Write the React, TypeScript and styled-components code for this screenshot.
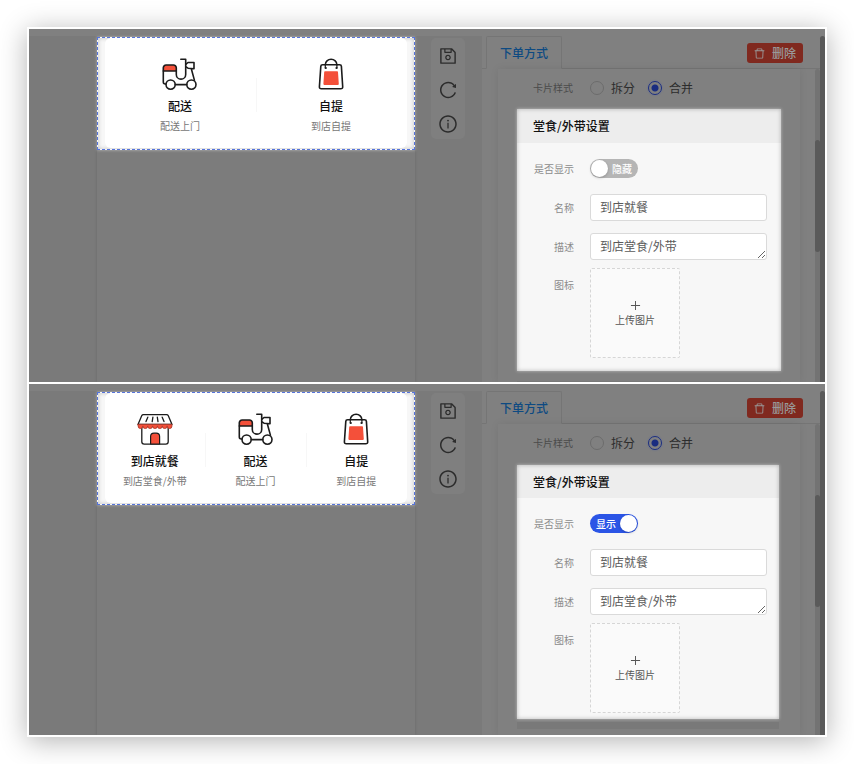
import React, { useState } from "react";
import styled, { createGlobalStyle, css } from "styled-components";
import {
  AiOutlineDelete,
  AiOutlineInfoCircle,
  AiOutlinePlus,
  AiOutlineReload,
  AiOutlineSave,
} from "react-icons/ai";

const GlobalStyle = createGlobalStyle`
  *, *::before, *::after { box-sizing: border-box; }
  body {
    margin: 0;
    background: #fff;
    color: #111;
    font-family: "Noto Sans CJK SC", sans-serif;
    font-size: 12px;
    line-height: 20px;
  }
  button, input, textarea { font: inherit; color: inherit; margin: 0; }
  button { border: 0; padding: 0; background: none; cursor: pointer; }
`;

const Page = styled.main`
  padding: 27px;
`;

const Frame = styled.div`
  display: flex;
  flex-direction: column;
  gap: 2px;
  border: 2px solid #fff;
  background: #fff;
  box-shadow: 0 4px 26px rgba(0, 0, 0, 0.3);
`;

const Panel = styled.section`
  display: grid;
  grid-template-columns: minmax(0, 1fr) 343px;
  padding-top: 7px;
  background: #808080;
  overflow: hidden;
`;

const Preview = styled.div`
  display: grid;
  grid-template-columns: 1fr 318px 1fr;
  background: #7a7a7a;
`;

const Phone = styled.div`
  grid-column: 2;
  padding-top: 1px;
  background: #7c7c7c;
  box-shadow: 0 0 3px rgba(0, 0, 0, 0.14);
`;

const Selection = styled.div`
  padding: 0 7px 1px;
  border: 1px dashed #5674dc;
  background: #f7f7f7;
  box-shadow: 0 0 3px rgba(255, 255, 255, 0.5), inset 0 0 4px rgba(0, 0, 0, 0.22);
`;

const Modes = styled.ul`
  display: flex;
  margin: 0;
  padding: 20px 0 12px;
  list-style: none;
  border-radius: 6px;
  background: #fff;
`;

const Mode = styled.li`
  flex: 1;
  display: flex;
  flex-direction: column;
  align-items: center;
  position: relative;

  & + &::before {
    content: "";
    position: absolute;
    left: 0;
    top: 20px;
    height: 34px;
    border-left: 1px solid #f7f7f7;
  }
`;

const ModeIcon = styled.svg`
  width: 36px;
  height: 34px;
  margin-bottom: 4px;
  fill: none;
  stroke: #1b1b1b;
  stroke-width: 1.6;
  stroke-linecap: round;
  stroke-linejoin: round;
`;

const ModeTitle = styled.strong`
  font-weight: 500;
`;

const ModeNote = styled.span`
  font-size: 10px;
  color: #777;
`;

const Tools = styled.div`
  justify-self: start;
  align-self: start;
  display: flex;
  flex-direction: column;
  align-items: center;
  gap: 14px;
  width: 34px;
  margin: 2px 0 0 16px;
  padding: 8px 0 5px;
  border-radius: 5px;
  background: #7f7f7f;
`;

const ToolButton = styled.button`
  display: flex;
  color: #2c2c2c;

  svg {
    width: 20px;
    height: 20px;
  }
`;

const Side = styled.div`
  display: flex;
`;

const Editor = styled.div`
  flex: 1;
  display: flex;
  flex-direction: column;
`;

const Track = styled.div<{ $outer?: boolean }>`
  width: 5px;
  flex: none;
  border-radius: 3px 3px 0 0;
  background: ${(p) => (p.$outer ? "#595959" : "#737373")};
`;

const Thumb = styled.div`
  height: 112px;
  margin-top: 71px;
  border-radius: 3px;
  background: #5a5a5a;
`;

const TabBar = styled.div`
  display: flex;
  justify-content: space-between;
  align-items: flex-start;
  height: 33px;
  padding: 0 17px 0 4px;
  box-shadow: inset 0 -1px #757575;
`;

const Tab = styled.button`
  align-self: stretch;
  padding: 0 13px;
  border: 1px solid #757575;
  border-bottom-color: #808080;
  border-radius: 2px 2px 0 0;
  background: #808080;
  color: #0d4a82;
  font-weight: 500;
`;

const DeleteButton = styled.button`
  display: flex;
  align-items: center;
  gap: 6px;
  height: 20px;
  margin-top: 7px;
  padding: 0 7px 0 6px;
  border-radius: 3px;
  background: #80291f;
  color: #999;
  font-weight: 500;

  svg {
    width: 13px;
    height: 13px;
  }
`;

const Scroller = styled.div`
  flex: 1;
  display: flex;
`;

const Content = styled.div<{ $inset: number; $gap: number }>`
  flex: 1;
  margin: 0 15px 0 16px;
  padding: 0 ${(p) => p.$inset}px 0 19px;
  box-shadow: 0 0 8px rgba(0, 0, 0, 0.08);

  fieldset {
    margin-bottom: ${(p) => p.$gap}px;
  }
`;

const StyleChoice = styled.fieldset`
  display: grid;
  grid-template-columns: 41px 1fr;
  column-gap: 16px;
  align-items: center;
  height: 39px;
  min-width: 0;
  margin: 0;
  padding: 0 0 2px 16px;
  border: 0;
  color: #2c2c2c;
`;

const ChoiceLabel = styled.span`
  font-size: 10px;
  color: #4b4b4b;
  white-space: nowrap;
`;

const Choices = styled.div`
  display: flex;
  gap: 13px;
`;

const Choice = styled.label`
  display: flex;
  align-items: center;
  gap: 7px;
`;

const Radio = styled.input`
  appearance: none;
  width: 14px;
  height: 14px;
  border: 1px solid #6c6c6c;
  border-radius: 50%;

  &:checked {
    border-color: #1a2d80;
    background: radial-gradient(circle, #1a2d80 0 3px, transparent 4px);
    box-shadow: 0 0 2px #5d6995;
  }
`;

const Form = styled.form`
  background: #f7f7f7;
  box-shadow: 0 0 3px rgba(255, 255, 255, 0.5), inset 0 0 4px rgba(0, 0, 0, 0.25);
`;

const FormTitle = styled.h2<{ $short: boolean }>`
  margin: 0;
  padding: 0 16px;
  font-size: 12px;
  font-weight: 500;
  line-height: ${(p) => (p.$short ? 33 : 34)}px;
  background: rgba(0, 0, 0, 0.04);
`;

const FormBody = styled.div<{ $right: number; $bottom: number }>`
  display: flex;
  flex-direction: column;
  gap: 12px;
  padding: 12px ${(p) => p.$right}px ${(p) => p.$bottom}px 16px;
`;

const Row = styled.div<{ $tall?: boolean }>`
  display: grid;
  grid-template-columns: 41px minmax(0, 1fr);
  column-gap: 16px;
  align-items: center;
  min-height: 27px;
  ${(p) =>
    p.$tall &&
    css`
      align-items: start;
      margin-top: -4px;
    `}
`;

const RowLabel = styled.label<{ $top?: boolean }>`
  justify-self: end;
  padding-top: ${(p) => (p.$top ? 4 : 0)}px;
  line-height: 26px;
  font-size: 10px;
  color: #8c8c8c;
  white-space: nowrap;
`;

const field = css`
  display: block;
  width: 100%;
  height: 27px;
  padding: 1px 9px 3px;
  border: 1px solid #dadada;
  border-radius: 3px;
  background: #fff;
  color: #5a5a5a;
  line-height: 21px;
  outline: none;
`;

const TextInput = styled.input`
  ${field}
`;

const TextArea = styled.textarea`
  ${field}
  resize: vertical;
  overflow: hidden;
`;

const Toggle = styled.label<{ $on: boolean }>`
  display: flex;
  align-items: center;
  justify-content: space-between;
  flex-direction: ${(p) => (p.$on ? "row-reverse" : "row")};
  width: 48px;
  height: 19px;
  padding: ${(p) => (p.$on ? "0 1px 0 6px" : "0 6px 0 1px")};
  border-radius: 10px;
  background: ${(p) => (p.$on ? "#2b55e6" : "#b5b5b5")};
  color: #fff;
  font-size: 10px;
  font-weight: 500;
  cursor: pointer;
`;

const ToggleInput = styled.input`
  appearance: none;
  width: 17px;
  height: 17px;
  border-radius: 50%;
  background: #fff;
  box-shadow: 0 1px 3px rgba(0, 0, 0, 0.2);
`;

const Upload = styled.button`
  display: flex;
  flex-direction: column;
  align-items: center;
  justify-content: center;
  width: 90px;
  height: 90px;
  border: 1px dashed #d6d6d6;
  border-radius: 2px;
  background: #fafafa;
  color: #555;
  font-size: 10px;
  line-height: 16px;

  svg {
    width: 13px;
    height: 13px;
  }
`;

const NextSection = styled.div<{ $before: number; $height: number; $after: number }>`
  height: ${(p) => p.$height}px;
  margin: ${(p) => p.$before}px 0 ${(p) => p.$after}px;
  background: #797979;
`;

const StoreIcon = () => (
  <ModeIcon viewBox="0 0 36 34" aria-hidden="true">
    <path d="M4.8 14v14.8a2.4 2.4 0 0 0 2.4 2.4h21.6a2.4 2.4 0 0 0 2.4-2.4V14" fill="#fff" strokeWidth="1.3" />
    <path d="M6.4 1.7h23.2q1.2 0 1.7 1.1L35 11.5H1L4.7 2.8q.5-1.1 1.7-1.1z" fill="#fff" strokeWidth="1.3" />
    <path
      d="M1 11.3h34v1.6a2.4 2.6 0 0 1-4.85 0a2.4 2.6 0 0 1-4.86 0a2.4 2.6 0 0 1-4.86 0a2.4 2.6 0 0 1-4.86 0a2.4 2.6 0 0 1-4.86 0a2.4 2.6 0 0 1-4.86 0a2.4 2.6 0 0 1-4.85 0z"
      fill="#f4503a"
      stroke="#a33a2c"
      strokeWidth="0.8"
    />
    <path d="M10.8 4.2 9 8.6M15.9 4.2 15.2 8.6M20.3 4.2l.7 4.4M25.2 4.2 27 8.6" strokeWidth="1.3" />
    <path d="M13.6 31v-7.4a3.4 3.4 0 0 1 3.4-3.4h2.2a3.4 3.4 0 0 1 3.4 3.4V31z" fill="#f4503a" strokeWidth="1.2" />
  </ModeIcon>
);

const ScooterIcon = () => (
  <ModeIcon viewBox="0 0 36 34" aria-hidden="true">
    <path d="M1.3 13V9.8A2.8 2.8 0 0 1 4.1 7h7.4a2.8 2.8 0 0 1 2.8 2.8V13z" fill="#f4503a" />
    <path d="M1.3 13v11q0 2 2 2h.6M14.3 13v3.4a4.7 4.7 0 0 0 9.4 0V1.3h-4.9" />
    <path d="M24 6.2l2-1.7h6v6.3l-6-.6-2-1.4M29.3 10.8l3.1 11.3M13.3 26.6h11.4" />
    <circle cx="8.6" cy="26.6" r="4.6" />
    <circle cx="29.4" cy="26.6" r="4.6" />
  </ModeIcon>
);

const BagIcon = () => (
  <ModeIcon viewBox="0 0 36 34" aria-hidden="true">
    <path d="M9.6 6.7h17q1.7 0 1.8 1.7l1.3 20.4q.1 2-1.9 2H8.3q-2 0-1.9-2L7.8 8.4q.1-1.7 1.8-1.7z" />
    <path d="M12.3 6.7a5.8 5.4 0 0 1 11.6 0" />
    <path d="M12.3 6.7v3M23.9 6.7v3" strokeWidth="1.2" />
    <path d="M12.7 10h.1M23.5 10h.1" strokeWidth="2.2" />
    <path d="M12 14.1h12.2l.8 12H11.2z" fill="#f4503a" stroke="#f4503a" />
  </ModeIcon>
);

type ModeData = { title: string; note: string; icon: () => React.ReactElement };

const dineIn: ModeData = { title: "到店就餐", note: "到店堂食/外带", icon: StoreIcon };
const baseModes: ModeData[] = [
  { title: "配送", note: "配送上门", icon: ScooterIcon },
  { title: "自提", note: "到店自提", icon: BagIcon },
];

function OrderModePanel({ id, initiallyShown }: { id: string; initiallyShown: boolean }) {
  const [shown, setShown] = useState(initiallyShown);
  const modes = shown ? [dineIn, ...baseModes] : baseModes;
  const short = initiallyShown;

  return (
    <Panel>
      <Preview>
        <Phone>
          <Selection>
            <Modes>
              {modes.map(({ title, note, icon: Icon }) => (
                <Mode key={title}>
                  <Icon />
                  <ModeTitle>{title}</ModeTitle>
                  <ModeNote>{note}</ModeNote>
                </Mode>
              ))}
            </Modes>
          </Selection>
        </Phone>
        <Tools>
          <ToolButton type="button" aria-label="保存"><AiOutlineSave /></ToolButton>
          <ToolButton type="button" aria-label="刷新"><AiOutlineReload /></ToolButton>
          <ToolButton type="button" aria-label="信息"><AiOutlineInfoCircle /></ToolButton>
        </Tools>
      </Preview>

      <Side>
        <Editor>
          <TabBar>
            <Tab type="button">下单方式</Tab>
            <DeleteButton type="button"><AiOutlineDelete />删除</DeleteButton>
          </TabBar>
          <Scroller>
            <Content $inset={short ? 21 : 19} $gap={short ? 2 : 1}>
              <StyleChoice aria-label="卡片样式">
                <ChoiceLabel>卡片样式</ChoiceLabel>
                <Choices>
                  <Choice><Radio type="radio" name={`${id}-style`} />拆分</Choice>
                  <Choice><Radio type="radio" name={`${id}-style`} defaultChecked />合并</Choice>
                </Choices>
              </StyleChoice>
              <Form>
                <FormTitle $short={short}>堂食/外带设置</FormTitle>
                <FormBody $right={short ? 12 : 14} $bottom={short ? 6 : 13}>
                  <Row>
                    <RowLabel htmlFor={`${id}-shown`}>是否显示</RowLabel>
                    <Toggle $on={shown}>
                      <ToggleInput
                        id={`${id}-shown`}
                        type="checkbox"
                        role="switch"
                        checked={shown}
                        onChange={(e) => setShown(e.target.checked)}
                      />
                      {shown ? "显示" : "隐藏"}
                    </Toggle>
                  </Row>
                  <Row>
                    <RowLabel htmlFor={`${id}-name`}>名称</RowLabel>
                    <TextInput id={`${id}-name`} defaultValue="到店就餐" />
                  </Row>
                  <Row>
                    <RowLabel htmlFor={`${id}-note`}>描述</RowLabel>
                    <TextArea id={`${id}-note`} rows={1} defaultValue="到店堂食/外带" />
                  </Row>
                  <Row $tall>
                    <RowLabel $top htmlFor={`${id}-icon`}>图标</RowLabel>
                    <Upload id={`${id}-icon`} type="button"><AiOutlinePlus />上传图片</Upload>
                  </Row>
                </FormBody>
              </Form>
              {short ? (
                <NextSection $before={3} $height={7} $after={6} />
              ) : (
                <NextSection $before={10} $height={1} $after={0} />
              )}
            </Content>
            <Track><Thumb /></Track>
          </Scroller>
        </Editor>
        <Track $outer />
      </Side>
    </Panel>
  );
}

export default function App() {
  return (
    <>
      <GlobalStyle />
      <Page>
        <Frame>
          <OrderModePanel id="hidden" initiallyShown={false} />
          <OrderModePanel id="visible" initiallyShown />
        </Frame>
      </Page>
    </>
  );
}
